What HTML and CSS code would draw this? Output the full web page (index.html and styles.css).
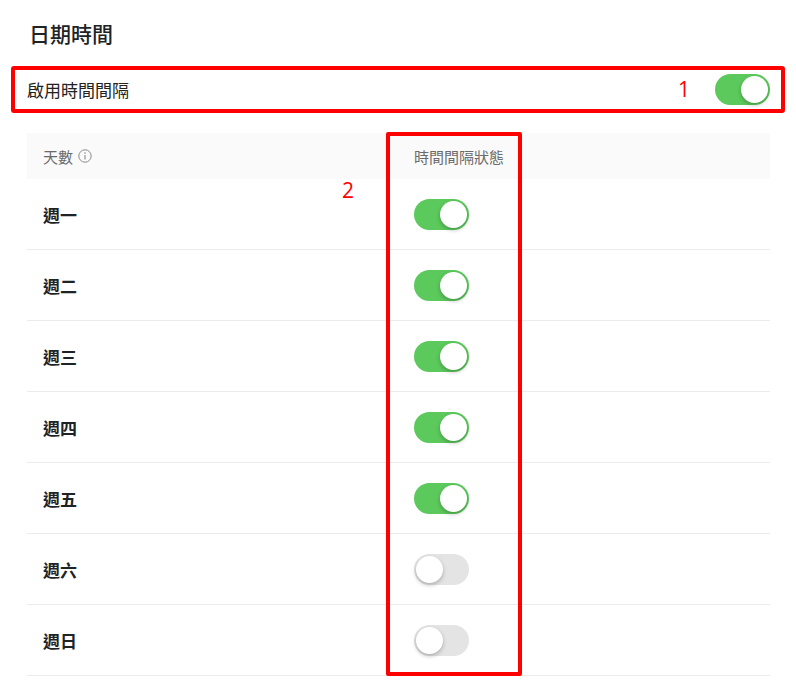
FILE: index.html
```html
<!DOCTYPE html>
<html lang="zh-Hant">
<head>
    <meta charset="UTF-8">
    <meta name="viewport" content="width=device-width, initial-scale=1.0">
    <title>日期時間</title>
    <link rel="stylesheet" href="styles.css">
</head>
<body>
    <div class="page">
        <h1 class="title">日期時間</h1>

        <div class="enable-row">
            <span class="enable-label">啟用時間間隔</span>
            <span class="mark mark-inline">1</span>
            <span class="switch on"><span class="knob"></span></span>
        </div>

        <div class="table">
            <div class="table-head">
                <div class="cell cell-day">
                    天數
                    <svg class="info" width="14" height="14" viewBox="0 0 14 14">
                        <circle cx="7" cy="7" r="6.2" fill="none" stroke="#8a8a8a" stroke-width="1"/>
                        <line x1="7" y1="6" x2="7" y2="10.6" stroke="#8a8a8a" stroke-width="1.1"/>
                        <circle cx="7" cy="4" r="0.8" fill="#8a8a8a"/>
                    </svg>
                </div>
                <div class="cell">時間間隔狀態</div>
            </div>

            <div class="row">
                <div class="cell cell-day">週一</div>
                <div class="cell"><span class="switch on"><span class="knob"></span></span></div>
            </div>
            <div class="row">
                <div class="cell cell-day">週二</div>
                <div class="cell"><span class="switch on"><span class="knob"></span></span></div>
            </div>
            <div class="row">
                <div class="cell cell-day">週三</div>
                <div class="cell"><span class="switch on"><span class="knob"></span></span></div>
            </div>
            <div class="row">
                <div class="cell cell-day">週四</div>
                <div class="cell"><span class="switch on"><span class="knob"></span></span></div>
            </div>
            <div class="row">
                <div class="cell cell-day">週五</div>
                <div class="cell"><span class="switch on"><span class="knob"></span></span></div>
            </div>
            <div class="row">
                <div class="cell cell-day">週六</div>
                <div class="cell"><span class="switch"><span class="knob"></span></span></div>
            </div>
            <div class="row">
                <div class="cell cell-day">週日</div>
                <div class="cell"><span class="switch"><span class="knob"></span></span></div>
            </div>

            <!-- annotation overlay -->
            <div class="annot-box"></div>
            <span class="mark mark-float">2</span>
        </div>
    </div>
</body>
</html>
```

FILE: styles.css
```css
* {
    box-sizing: border-box;
    margin: 0;
    padding: 0;
}

body {
    font-family: 'Noto Sans CJK TC', 'Noto Sans', sans-serif;
    background-color: #fff;
    color: #222;
}

.page {
    padding: 0 26px 0 27px;
}

.title {
    padding-top: 18px;
    margin-left: 2px;
    font-size: 21px;
    line-height: 30px;
    font-weight: 500;
    color: #1e2326;
}

.enable-row {
    display: flex;
    align-items: center;
    height: 47px;
    margin: 18px -15px 0 -16px;
    padding: 0 11px 0 12px;
    border: 4px solid #ff0000;
    border-radius: 3px;
}

.enable-label {
    flex: 1;
    font-size: 17px;
    color: #222;
}

.mark {
    color: #ff0000;
    font-family: 'Open Sans', 'Noto Sans', sans-serif;
    font-size: 21px;
    line-height: 1;
}

.mark-inline {
    margin-right: 25px;
}

.switch {
    position: relative;
    display: inline-block;
    width: 55px;
    height: 31px;
    border-radius: 16px;
    background-color: #e4e4e4;
}

.switch.on {
    background-color: #5cc95c;
}

.knob {
    position: absolute;
    top: 2px;
    left: 2px;
    width: 27px;
    height: 27px;
    border-radius: 50%;
    background-color: #fff;
    box-shadow: 0 2px 4px rgba(0, 0, 0, 0.25);
}

.switch.on .knob {
    left: 26px;
}

.table {
    position: relative;
    margin-top: 20px;
}

.table-head,
.row {
    display: grid;
    grid-template-columns: 371px 1fr;
    align-items: center;
}

.table-head {
    height: 46px;
    background-color: #fafafa;
    font-size: 15px;
    color: #6b6b6b;
}

.row {
    height: 71px;
    border-bottom: 1px solid #ebebeb;
}

.cell {
    display: flex;
    align-items: center;
    padding-left: 16px;
}

.row .cell-day {
    font-size: 17px;
    font-weight: bold;
    color: #1e2326;
}

.info {
    margin-left: 5px;
}

.annot-box {
    position: absolute;
    left: 359px;
    top: -1px;
    width: 136px;
    height: 544px;
    border: 4px solid #ff0000;
    border-radius: 2px;
}

.mark-float {
    position: absolute;
    left: 315px;
    top: 47px;
}
```
